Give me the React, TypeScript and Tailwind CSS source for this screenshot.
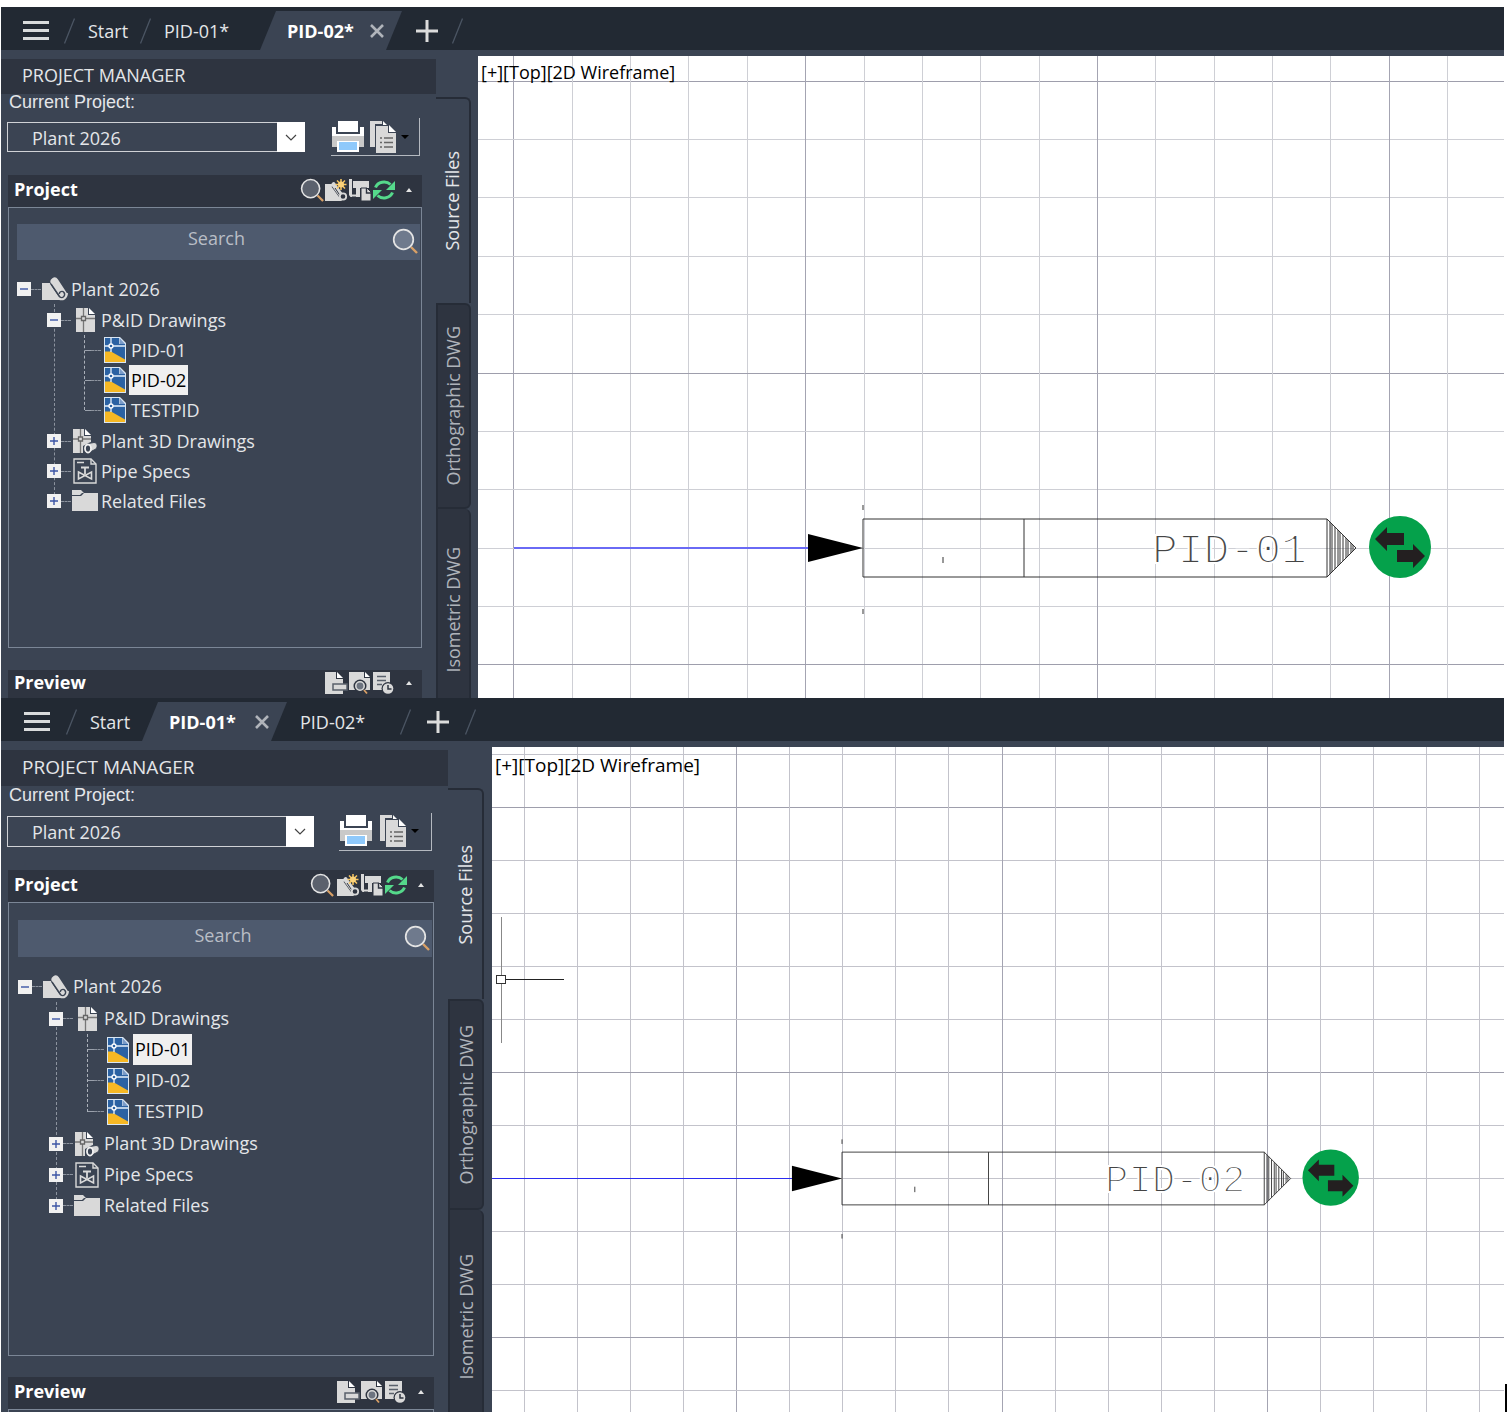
import type { ReactNode } from "react";
import clsx from "clsx";

type Tab = { label: string; active?: boolean };

type Sheet = {
    id: string;
    large: boolean;
    tabs: Tab[];
    drawings: { name: string; selected?: boolean }[];
    canvas: ReactNode;
};

/* ---------- icons ---------- */

const light = "#d9d9d9";
const dark = "#2e3440";

function MagnifierIcon({ size, fill }: { size: number; fill: string }) {
    return (
        <svg width={size} height={size} viewBox="0 0 26 26" fill="none">
            <path d="M19 19l6 6" stroke="#d9a066" strokeWidth="2.4" />
            <circle cx="11.5" cy="11.5" r="9.8" fill={fill} stroke="#e4e4e4" strokeWidth="1.7" />
        </svg>
    );
}

function PrinterIcon() {
    return (
        <svg width="34" height="34" viewBox="0 0 34 34">
            <path d="M7 1h20v11H7z" fill="#fff" />
            <path d="M1 7h4v7h24V7h4v10H1z" fill="#fff" />
            <path d="M1 16h32v11h-5v-5H6v5H1z" fill="#c9c9c9" />
            <path d="M6 21h22v11H6z" fill="#fff" />
            <path d="M8 22h18v8H8z" fill="#8fc9fb" />
        </svg>
    );
}

function ReportIcon() {
    return (
        <svg width="28" height="34" viewBox="0 0 28 34">
            <path d="M1 1h12v3H6v23H1z" fill={light} />
            <path d="M14 1l4 4h-4z" fill="#fff" />
            <path d="M7 6h12v7h8v20H7z" fill={light} />
            <path d="M20 5l7 7h-7z" fill="#fff" />
            <path d="M11 18h2m2 0h9M11 22.5h2m2 0h9M11 27h2m2 0h9" stroke="#666" strokeWidth="1.6" />
        </svg>
    );
}

function NewProjectIcon() {
    return (
        <svg width="24" height="22" viewBox="0 0 24 22">
            <path d="M1 5h7l2 2 8 15H1z" fill={light} />
            <path d="M10 6l8 11" stroke={dark} strokeWidth="6" />
            <path d="M9.5 5.5l8.500 12" stroke={light} strokeWidth="4.5" strokeLinecap="round" />
            <path d="M11 9l6 9" stroke={dark} strokeWidth="1" />
            <circle cx="19" cy="17.5" r="3.2" fill={dark} stroke={light} strokeWidth="1.8" />
            <path d="M17 0v11M11.5 5.500h11M13 1.500l8 8M21 1.500l-8 8" stroke="#fbc860" strokeWidth="1.5" />
            <circle cx="17" cy="5.5" r="3" fill="#fbd27a" />
        </svg>
    );
}

function CopyDrawingIcon() {
    return (
        <svg width="24" height="22" viewBox="0 0 24 22">
            <path d="M1 0h3v18H2.500L1 16z" fill={light} />
            <path d="M5 2h16v7h-9v9H8V9H5z" fill={light} />
            <path d="M3 16.500h5" stroke={light} strokeWidth="2" />
            <path d="M13 9h6l4 4v9H13z" fill={light} stroke={dark} />
            <path d="M18.500 9v5h5" fill="none" stroke={dark} strokeWidth="1.4" />
        </svg>
    );
}

function RefreshIcon() {
    return (
        <svg width="24" height="22" viewBox="0 0 24 22" fill="none" stroke="#55d98b" strokeWidth="3">
            <path d="M3.500 8.500a9 8 0 0 1 15-3" />
            <path d="M20.500 13.500a9 8 0 0 1-15 3" />
            <path d="M23 2v9h-9z" fill="#55d98b" stroke="none" />
            <path d="M1 20v-9h9z" fill="#55d98b" stroke="none" />
        </svg>
    );
}

function ExportIcon() {
    return (
        <svg width="24" height="24" viewBox="0 0 24 24">
            <path d="M1 1h11v7h7v15H1z" fill={light} />
            <path d="M13 1l6 6h-6z" fill="#fff" />
            <path d="M9 13h14v6H9z" fill={light} stroke="#59606b" strokeWidth="1.5" />
        </svg>
    );
}

function PreviewIcon() {
    return (
        <svg width="24" height="24" viewBox="0 0 24 24">
            <path d="M1 1h15v6h6v12H1z" fill={light} />
            <path d="M17 1l5 5h-5z" fill="#fff" />
            <circle cx="12" cy="15" r="6.5" fill={dark} />
            <circle cx="12" cy="15" r="4.2" fill="#6d7480" stroke={light} strokeWidth="1.6" />
            <path d="M16 19l3 3.500" stroke="#d9a066" strokeWidth="1.8" />
        </svg>
    );
}

function HistoryIcon() {
    return (
        <svg width="24" height="24" viewBox="0 0 24 24">
            <path d="M1 1h17v18H1z" fill={light} />
            <path d="M5 5.500h9M5 9.500h9M5 13.500h5" stroke="#59606b" strokeWidth="1.5" />
            <circle cx="16" cy="17.5" r="6.5" fill={dark} />
            <circle cx="16" cy="17.5" r="5.3" fill={light} />
            <path d="M16 14v4h3.500" fill="none" stroke={dark} strokeWidth="1.5" />
        </svg>
    );
}

function ProjectIcon() {
    return (
        <svg width="26" height="24" viewBox="0 0 26 24">
            <path d="M0 6h10l12 17H0z" fill={light} />
            <path d="M12 4.500l8 12" stroke="#3b4453" strokeWidth="9" strokeLinecap="round" />
            <path d="M12.500 4.500l8.500 13" stroke={light} strokeWidth="8" strokeLinecap="round" />
            <path d="M9 7l8.500 12.500c3 3 6.500-1 4.500-4-1.500-2-5-1-4.500 1.500" fill="none" stroke="#3b4453" strokeWidth="1.4" />
            <path d="M17 22c4 1.500 8-1 8-6" fill="none" stroke={light} strokeWidth="1.8" />
        </svg>
    );
}

function PidFolderIcon() {
    return (
        <svg width="26" height="26" viewBox="0 0 26 26">
            <path d="M4 1h12v7h7v17H4z" fill={light} />
            <path d="M17 1l6 6h-6z" fill="#fff" />
            <path d="M11.500 1v24M4 11.500h19" stroke="#777" strokeWidth="1.3" />
            <path d="M9.500 9.500h4v4h-4z" fill={light} stroke="#666" strokeWidth="1.3" />
        </svg>
    );
}

function DwgIcon() {
    return (
        <svg width="26" height="26" viewBox="0 0 26 26">
            <path d="M2 0h16l6 6v20H2z" fill="#d9e6f3" />
            <path d="M3 1h14v6h6v18H3z" fill="#2b62a3" />
            <path d="M17.500 1l5.500 6h-5.500z" fill="#7b9cc8" />
            <path d="M3 14.500h6l14 8V25H3z" fill="#f6b824" />
            <path d="M9 1v14M3 9h20" stroke="#e8f1fa" strokeWidth="1.3" />
            <circle cx="9" cy="9" r="2" fill="#2b62a3" stroke="#fff" strokeWidth="1.3" />
        </svg>
    );
}

function Plant3dIcon() {
    return (
        <svg width="26" height="26" viewBox="0 0 26 26">
            <path d="M1 1h11v7h7v6l-8 4v7H1z" fill={light} />
            <path d="M13 1l6 6h-6z" fill="#fff" />
            <path d="M8.500 1v24M1 11h18" stroke="#777" strokeWidth="1.3" />
            <path d="M6.500 9h4v4h-4z" fill={light} stroke="#666" strokeWidth="1.3" />
            <path d="M16 15.500l6-1c4 0 4 6 1 7l-6 3z" fill={light} stroke="#3b4453" />
            <ellipse cx="16" cy="20.5" rx="3" ry="4" fill="#3b4453" stroke="#f2f2f2" strokeWidth="1.8" />
        </svg>
    );
}

function PipeSpecIcon() {
    return (
        <svg width="26" height="26" viewBox="0 0 26 26" fill="none" stroke={light} strokeWidth="1.4">
            <path d="M2 1h17l5 5v19H2z" />
            <path d="M19 1v5h5M5 4.500h7" />
            <path d="M9 9.500h8M13 9.500v7" strokeWidth="1.8" />
            <path d="M6.500 14l13 7v-7l-13 7z" strokeWidth="1.6" />
        </svg>
    );
}

function FolderIcon() {
    return (
        <svg width="26" height="24" viewBox="0 0 26 24">
            <path d="M0 1h9l3 3h-2L8 6H0z" fill={light} />
            <path d="M0 7h9l3-3h14v18H0z" fill={light} />
        </svg>
    );
}

/* ---------- file tabs ---------- */

function Slash() {
    return (
        <svg width="11" height="26" viewBox="0 0 11 26" className="shrink-0">
            <path d="M0.500 25.500L10.500 0.500" stroke="#4b5563" strokeWidth="1.3" />
        </svg>
    );
}

function FileTabs({ sheet }: { sheet: Sheet }) {
    const { tabs, large } = sheet;

    return (
        <nav
            aria-label="Open drawings"
            className={clsx("flex h-[43px] items-center bg-[#222933] pt-1 text-[18px] text-[#e4e6e9]", large ? "pl-[23px]" : "pl-[22px]")}
        >
            <button aria-label="Menu" className={clsx("flex w-[26px] shrink-0 flex-col gap-[5px]", large ? "mr-4" : "mr-[15px]")}>
                <span className="h-[3px] bg-[#d9dbdc]" />
                <span className="h-[3px] bg-[#d9dbdc]" />
                <span className="h-[3px] bg-[#d9dbdc]" />
            </button>
            <Slash />
            {tabs.map((tab, i) =>
                tab.active ? (
                    <div
                        key={tab.label}
                        className={clsx(
                            "flex h-[39px] items-center justify-between bg-[#3b4453] pr-[18px] pl-[27px] [clip-path:polygon(16px_0,100%_0,calc(100%-16px)_100%,0_100%)]",
                            large ? "w-[145px]" : "w-[142px]",
                        )}
                    >
                        <button className="pt-0.5 font-bold text-white">{tab.label}</button>
                        <button aria-label={`Close ${tab.label}`}>
                            <svg width="14" height="14" viewBox="0 0 14 14">
                                <path d="M1 1l12 12M13 1L1 13" stroke="#b0b4ba" strokeWidth="2.6" />
                            </svg>
                        </button>
                    </div>
                ) : (
                    <div key={tab.label} className="flex items-center">
                        <button className={clsx("pt-0.5 pl-[13px] text-left", i === 0 ? "w-[65px]" : large ? "w-[113px]" : "w-[109px]")}>
                            {tab.label}
                        </button>
                        {!tabs[i + 1]?.active && <Slash />}
                    </div>
                ),
            )}
            <button aria-label="New drawing" className={large ? "mx-4" : "mx-[14px]"}>
                <svg width="22" height="22" viewBox="0 0 22 22">
                    <path d="M11 0v22M0 11h22" stroke="#dcdcdc" strokeWidth="3" />
                </svg>
            </button>
            <Slash />
        </nav>
    );
}

/* ---------- project manager ---------- */

function SectionHeader({ title, className, children }: { title: string; className: string; children: ReactNode }) {
    return (
        <div className={clsx("flex shrink-0 items-center bg-[#2e3440] pr-2 pb-[3px] pl-1.5", className)}>
            <h3 className="flex-1 font-bold text-white">{title}</h3>
            {children}
            <button aria-label={`Collapse ${title}`} className="ml-2 p-0.5">
                <svg width="6" height="4" viewBox="0 0 6 4">
                    <path d="M0 4l3-4 3 4z" fill="#e4e4e4" />
                </svg>
            </button>
        </div>
    );
}

type TreeRowProps = { icon: ReactNode; label: string; state?: "open" | "closed"; large: boolean; selected?: boolean };

function TreeRow({ icon, label, state, large, selected }: TreeRowProps) {
    return (
        <div className={clsx("flex items-center", large ? "h-[31px]" : "h-[30px]")}>
            {state ? (
                <button aria-label={`Toggle ${label}`} className="z-10 flex size-[14px] items-center justify-center bg-[#f1f1f1]">
                    <svg width="8" height="8" viewBox="0 0 8 8">
                        <path d={state === "open" ? "M0 4h8" : "M0 4h8M4 0v8"} stroke="#3c55a5" strokeWidth="1.4" />
                    </svg>
                </button>
            ) : (
                <span className="ml-2 w-1.5 border-t border-dashed border-[#9aa1ac]" />
            )}
            <span className="w-[10px] border-t border-dashed border-[#8c939e]" />
            <span className="ml-px flex w-[26px] justify-center">{icon}</span>
            <span className={clsx("h-full px-0.5 leading-[30px]", large ? "ml-0.5" : "ml-px", selected && "bg-[#f0f0f0] text-black")}>{label}</span>
        </div>
    );
}

function ProjectTree({ sheet }: { sheet: Sheet }) {
    const { large, drawings } = sheet;
    const indent = large ? "pl-[31px]" : "pl-[30px]";

    return (
        <ul className={large ? "pl-[9px]" : "pl-2"}>
            <li>
                <TreeRow icon={<ProjectIcon />} label="Plant 2026" state="open" large={large} />
                <ul className={clsx("relative pt-px before:absolute before:top-0 before:bottom-4 before:ml-[7px] before:border-l before:border-dashed before:border-[#8c939e]", indent)}>
                    <li>
                        <TreeRow icon={<PidFolderIcon />} label="P&ID Drawings" state="open" large={large} />
                        <ul className={clsx("relative pb-px before:absolute before:top-0 before:bottom-4 before:ml-[7px] before:border-l before:border-dashed before:border-[#aab0b9]", indent)}>
                            {drawings.map((d) => (
                                <li key={d.name}>
                                    <TreeRow icon={<DwgIcon />} label={d.name} selected={d.selected} large={large} />
                                </li>
                            ))}
                        </ul>
                    </li>
                    <li>
                        <TreeRow icon={<Plant3dIcon />} label="Plant 3D Drawings" state="closed" large={large} />
                    </li>
                    <li>
                        <TreeRow icon={<PipeSpecIcon />} label="Pipe Specs" state="closed" large={large} />
                    </li>
                    <li>
                        <TreeRow icon={<FolderIcon />} label="Related Files" state="closed" large={large} />
                    </li>
                </ul>
            </li>
        </ul>
    );
}

function SideTabs({ large }: { large: boolean }) {
    const height = large ? "h-[211px]" : "h-[206px]";
    const text = "rotate-180 [writing-mode:vertical-rl]";

    return (
        <div className={clsx("mt-[38px] flex shrink-0 flex-col", large ? "w-[36px]" : "w-[35px]")}>
            <button className={clsx("flex shrink-0 items-center justify-center rounded-tr-md border-t-2 border-r-2 border-[#262c37] text-[#e4e6e9]", height)}>
                <span className={text}>Source Files</span>
            </button>
            <button className={clsx("flex shrink-0 items-center justify-center rounded-r-md border-2 border-[#262c37] bg-[#2e3440] text-[#aeb3ba]", height)}>
                <span className={text}>Orthographic DWG</span>
            </button>
            <button
                className={clsx(
                    "flex grow basis-0 items-start justify-center rounded-tr-md border-r-2 border-l-2 border-[#262c37] bg-[#2e3440] text-[#aeb3ba]",
                    large ? "pt-11" : "pt-[38px]",
                )}
            >
                <span className={text}>Isometric DWG</span>
            </button>
        </div>
    );
}

function ProjectManager({ sheet }: { sheet: Sheet }) {
    const { id, large } = sheet;

    return (
        <aside className={clsx("flex shrink-0 pt-[9px] text-[18px] text-[#e4e6e9]", large ? "w-[491px]" : "w-[477px]")}>
            <div className={clsx("flex flex-col", large ? "w-[447px]" : "w-[435px]")}>
                <h2 className={clsx("bg-[#2e3440] pl-[21px]", large ? "h-9 text-[19px] leading-[34px]" : "h-[35px] leading-[33px]")}>
                    PROJECT MANAGER
                </h2>
                <label
                    htmlFor={`${id}-project`}
                    className={clsx("pl-2 font-['Liberation_Sans',sans-serif]", large ? "h-[30px] leading-[19px]" : "h-[28px] leading-[17px]")}
                >
                    Current Project:
                </label>
                <div className={clsx("flex items-center justify-between pr-4 pl-[6px]", large ? "h-[31px]" : "h-[30px]")}>
                    <div className={clsx("relative h-full", large ? "w-[307px]" : "w-[298px]")}>
                        <select
                            id={`${id}-project`}
                            className="h-full w-full appearance-none border border-[#d0d2d6] bg-transparent pt-0.5 pl-6"
                        >
                            <option>Plant 2026</option>
                        </select>
                        <span className="pointer-events-none absolute inset-y-0 right-0 flex w-7 items-center justify-center bg-white">
                            <svg width="12" height="7" viewBox="0 0 12 7" fill="none">
                                <path d="M1 1l5 5 5-5" stroke="#444" strokeWidth="1.2" />
                            </svg>
                        </span>
                    </div>
                    <div className="flex h-[38px] items-center border-r border-b border-[#b4b9c0]">
                        <button aria-label="Print">
                            <PrinterIcon />
                        </button>
                        <button aria-label="Reports" className={clsx("flex items-center gap-1", large ? "ml-1.5 pr-3" : "ml-1 pr-2.5")}>
                            <ReportIcon />
                            <svg width="8" height="4" viewBox="0 0 8 4">
                                <path d="M0 0h8L4 4z" fill="#000" />
                            </svg>
                        </button>
                    </div>
                </div>

                <div className="mt-[23px] mr-[14px] ml-[7px] flex grow flex-col">
                    <SectionHeader title="Project" className="h-8">
                        <button aria-label="Find" className={large ? "mr-0.5" : undefined}>
                            <MagnifierIcon size={24} fill="#5b616d" />
                        </button>
                        <button aria-label="New project"><NewProjectIcon /></button>
                        <button aria-label="Copy drawing"><CopyDrawingIcon /></button>
                        <button aria-label="Refresh"><RefreshIcon /></button>
                    </SectionHeader>
                    <div className={clsx("border border-[#7b8696]", large ? "h-[454px]" : "h-[441px]")}>
                        <div className={clsx("relative mr-px mb-[14px] bg-[#4e5a6e]", large ? "mt-[17px] ml-[9px] h-[37px]" : "mt-4 ml-2 h-9")}>
                            <input
                                aria-label="Search"
                                placeholder="Search"
                                className="h-full w-full pr-1 pb-2 text-center outline-none placeholder:text-[#b9bec6]"
                            />
                            <button aria-label="Run search" className="absolute right-0.5 bottom-1.5">
                                <MagnifierIcon size={26} fill="#6f7a8d" />
                            </button>
                        </div>
                        <ProjectTree sheet={sheet} />
                    </div>
                    <SectionHeader title="Preview" className={large ? "mt-[21px] h-8" : "mt-[22px] h-7"}>
                        <button aria-label="Export"><ExportIcon /></button>
                        <button aria-label="Preview drawing"><PreviewIcon /></button>
                        <button aria-label="History"><HistoryIcon /></button>
                    </SectionHeader>
                    {large && <div className="min-h-[3px] grow border-x border-t border-[#7b8696]" />}
                </div>
            </div>
            <SideTabs large={large} />
        </aside>
    );
}

/* ---------- drawing area ---------- */

type GridProps = { x: number; y: number; step: number; majorX: number; majorY: number; minor: string };

function Grid({ x, y, step, majorX, majorY, minor }: GridProps) {
    const lines = Array.from({ length: 36 }, (_, i) => i);

    return (
        <g shapeRendering="crispEdges">
            {lines.map((i) => (
                <g key={i}>
                    <path d={`M${Math.round(x + i * step) + 0.5} 0v1600`} stroke={i % 5 === majorX ? "#a4a4b2" : minor} />
                    <path d={`M0 ${Math.round(y + i * step) + 0.5}h3000`} stroke={i % 5 === majorY ? "#9e9eac" : minor} />
                </g>
            ))}
        </g>
    );
}

// Off-page connector, origin at the tip of the incoming arrow
function Connector({ x, y, scale, label, fontSize }: { x: number; y: number; scale: number; label: string; fontSize: number }) {
    const hatch = [3, 5, 8, 11, 13, 16, 19, 21, 24, 26];

    return (
        <>
            <g transform={`translate(${x} ${y}) scale(${scale})`} fill="none" stroke="#333" strokeWidth="1">
                <path d="M-55-14L0 0l-55 14z" fill="#000" stroke="none" />
                <path d="M0-29h464v58H0zM161-29v58M464-29l29 29-29 29" />
                {hatch.map((h) => (
                    <path key={h} d={`M${464 + h} ${h - 29}V${29 - h}`} />
                ))}
                <path d="M0-43v5M0 61v5M80 9v6" />
                <g stroke="none">
                    <circle cx="537" cy="-1" r="31" fill="#05a14b" />
                    <path d="M512-9l12-12v6h17v12h-17v6z" fill="#231f20" />
                    <path d="M562 8l-12-12v6h-16v12h16v6z" fill="#231f20" />
                </g>
            </g>
            <text
                x={x + 289 * scale}
                y={y + 15 * scale}
                fontSize={fontSize}
                fill="#444"
                stroke="#fff"
                strokeWidth="2"
                className="font-['Liberation_Mono',monospace]"
            >
                {label}
            </text>
        </>
    );
}

function ViewControls({ large }: { large: boolean }) {
    return (
        <div className={clsx("relative flex pl-[3px] text-black", large ? "pt-1 text-[19px]" : "pt-[3px] text-[18px]")}>
            <button>[+]</button>
            <button>[Top]</button>
            <button>[2D Wireframe]</button>
        </div>
    );
}

function Pane({ sheet, className }: { sheet: Sheet; className?: string }) {
    return (
        <section className={clsx("flex flex-col bg-[#3b4453]", className)}>
            <FileTabs sheet={sheet} />
            <div className="flex grow">
                <ProjectManager sheet={sheet} />
                <div className="relative mt-1.5 min-w-0 flex-1 overflow-hidden bg-white">
                    <svg className="absolute inset-0 h-full w-full">{sheet.canvas}</svg>
                    <ViewControls large={sheet.large} />
                </div>
            </div>
        </section>
    );
}

const sheets: Sheet[] = [
    {
        id: "pid-02",
        large: false,
        tabs: [{ label: "Start" }, { label: "PID-01*" }, { label: "PID-02*", active: true }],
        drawings: [{ name: "PID-01" }, { name: "PID-02", selected: true }, { name: "TESTPID" }],
        canvas: (
            <>
                <Grid x={35.4} y={24.75} step={58.35} majorX={0} majorY={0} minor="#cecfd5" />
                <path d="M36 492h296" stroke="#6a6af5" strokeWidth="2" />
                <Connector x={385} y={492} scale={1} label="PID-01" fontSize={43} />
            </>
        ),
    },
    {
        id: "pid-01",
        large: true,
        tabs: [{ label: "Start" }, { label: "PID-01*", active: true }, { label: "PID-02*" }],
        drawings: [{ name: "PID-01", selected: true }, { name: "PID-02" }, { name: "TESTPID" }],
        canvas: (
            <>
                <Grid x={32} y={6.6} step={53.06} majorX={4} majorY={1} minor="#c3c3cb" />
                <path d="M0 431.500h302" stroke="#2b2bf0" />
                <Connector x={350} y={431.5} scale={0.91} label="PID-02" fontSize={39} />
                <g shapeRendering="crispEdges" fill="none">
                    <path d="M9.500 170v126" stroke="#888" />
                    <path d="M5 232.500h67" stroke="#222" />
                    <path d="M4.500 228.500h9v8h-9z" fill="#fff" stroke="#333" />
                </g>
            </>
        ),
    },
];

export default function App() {
    return (
        <main className="relative flex min-h-screen flex-col bg-white pt-[7px] pr-1.5 pl-px font-['Open_Sans',sans-serif]">
            <Pane sheet={sheets[0]} />
            <Pane sheet={sheets[1]} className="grow" />
            <div className="absolute right-[3px] bottom-0 h-7 w-0.5 bg-black" />
        </main>
    );
}
